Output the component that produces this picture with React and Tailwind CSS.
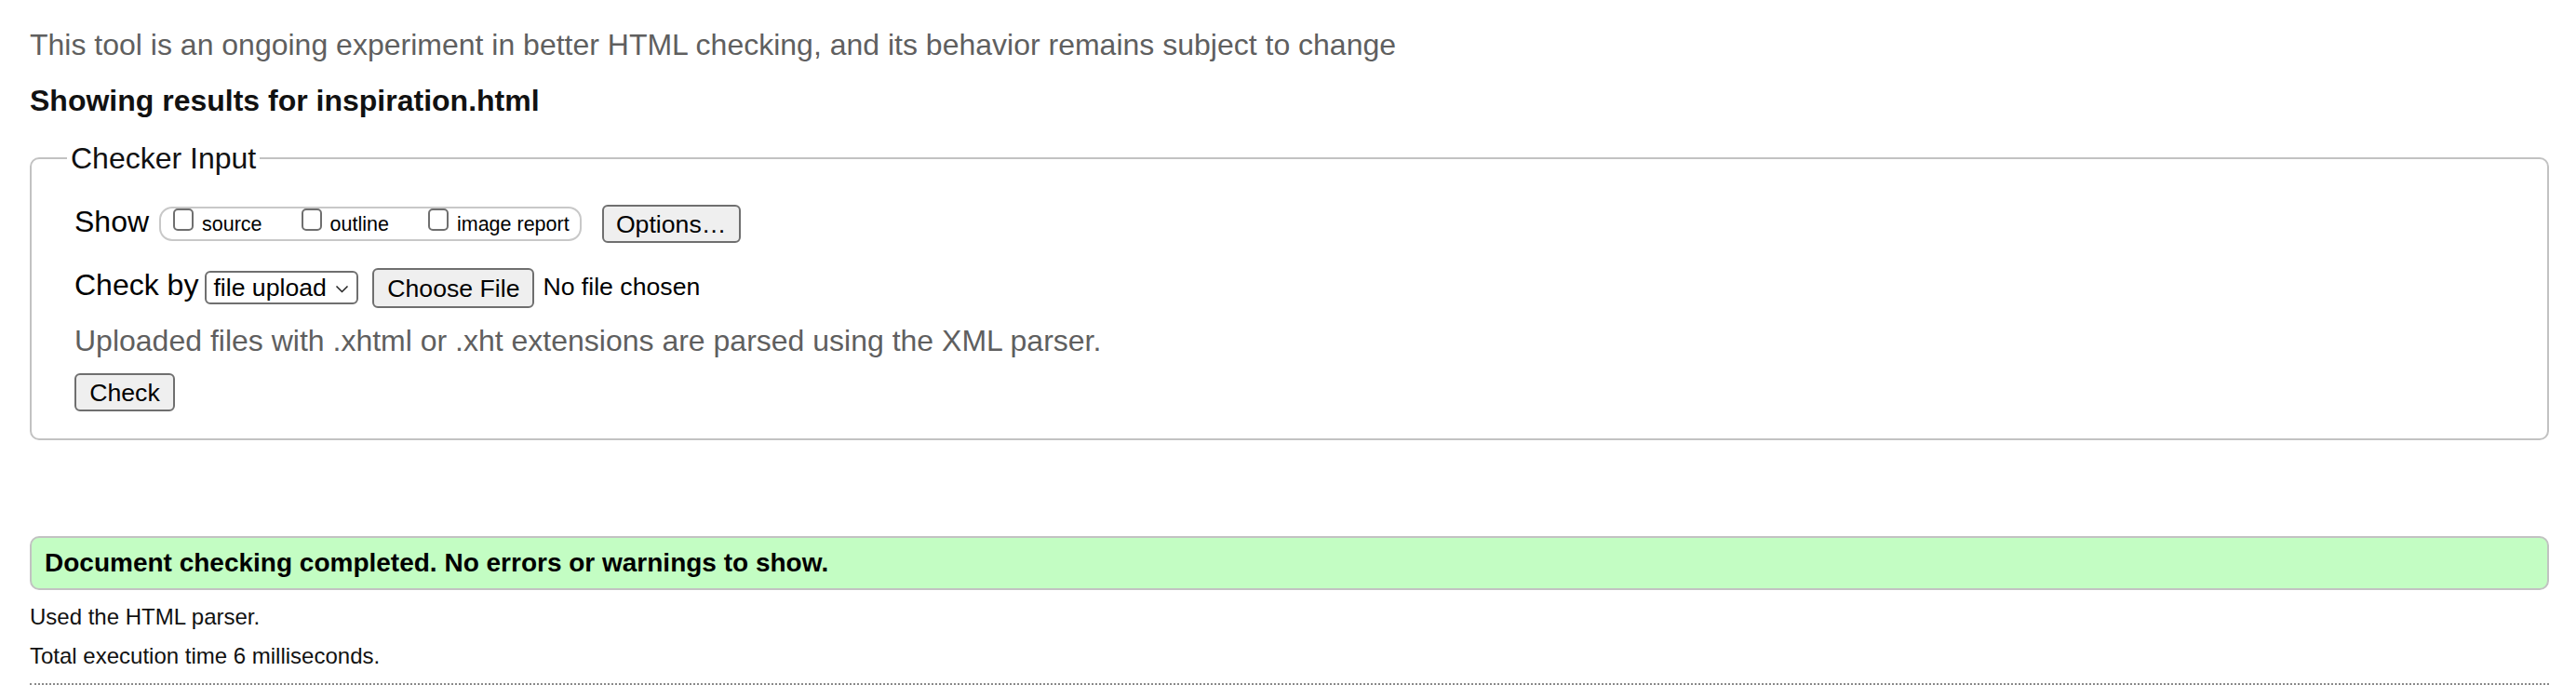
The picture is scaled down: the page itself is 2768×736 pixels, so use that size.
import React from 'react';

const Box = () => (
  <span className="block w-[22px] h-[24px] border-2 border-[#6f6f6f] rounded-[5px] bg-white shrink-0" />
);

const Option = ({ label, first }) => (
  <label className={`flex items-start ${first ? '' : 'ml-[42px]'}`}>
    <Box />
    <span className="ml-[9px] mt-[4px] text-[21.5px] leading-[26px] text-black">{label}</span>
  </label>
);

const Button = ({ children, className = '' }) => (
  <button
    type="button"
    className={`flex items-center justify-center border-2 border-[#6f6f6f] rounded-[6px] bg-[#efefef] text-[26.67px] leading-[30px] text-black ${className}`}
  >
    {children}
  </button>
);

export default function App() {
  return (
    <div
      className="h-[736px] overflow-hidden bg-white pl-[32px] pr-[29px] pt-[30px] text-black"
      style={{ fontFamily: '"Liberation Sans", Arial, sans-serif' }}
    >
      <p className="text-[32px] leading-[36px] text-[#5f5f5f]">
        This tool is an ongoing experiment in better HTML checking, and its behavior remains subject to change
      </p>
      <h2 className="mt-[24px] text-[32px] leading-[36px] font-bold text-[#111]">
        Showing results for inspiration.html
      </h2>

      <fieldset className="mt-[26px] border-2 border-[#c2c2c2] rounded-[10px] pl-[46px] pr-4 pt-[32px] pb-[29px]">
        <legend className="-ml-[8px] px-[4px] text-[32px] leading-[36px] text-[#111]">Checker Input</legend>

        <div className="flex items-start h-[41px]">
          <span className="text-[32px] leading-[36px]">Show</span>
          <div className="ml-[11px] mt-[2px] flex items-start h-[37px] border-2 border-[#c8c8c8] rounded-[14px] pl-[13px] pr-[11px]">
            <Option label="source" first />
            <Option label="outline" />
            <Option label="image report" />
          </div>
          <Button className="ml-[22px] w-[149px] h-[41px]">Options…</Button>
        </div>

        <div className="mt-[27px] flex items-start h-[43px]">
          <span className="text-[32px] leading-[36px]">Check by</span>
          <div className="ml-[7px] mt-[3px] flex items-center h-[36px] w-[165px] border-2 border-[#6f6f6f] rounded-[6px] pl-[7px] pr-[8px]">
            <span className="text-[26.67px] leading-[30px]">file upload</span>
            <svg className="ml-auto mt-[3px]" width="15" height="9" viewBox="0 0 15 9" fill="none">
              <polyline points="1.5,1.5 7.5,7.5 13.5,1.5" stroke="#222" strokeWidth="1.5" />
            </svg>
          </div>
          <Button className="ml-[15px] w-[174px] h-[43px]">Choose File</Button>
          <span className="ml-[9px] mt-[5px] text-[26.67px] leading-[30px]">No file chosen</span>
        </div>

        <p className="mt-[17px] text-[32px] leading-[36px] text-[#5f5f5f]">
          Uploaded files with .xhtml or .xht extensions are parsed using the XML parser.
        </p>

        <Button className="mt-[17px] w-[108px] h-[41px]">Check</Button>
      </fieldset>

      <div className="mt-[103px] flex items-center h-[58px] border-2 border-[#c2c2c2] rounded-[10px] bg-[#c3fdc3] pl-[14px]">
        <p className="text-[28px] leading-[32px] font-bold text-black">
          Document checking completed. No errors or warnings to show.
        </p>
      </div>

      <p className="mt-[15px] text-[24px] leading-[28px] text-[#111]">Used the HTML parser.</p>
      <p className="mt-[14px] text-[24px] leading-[28px] text-[#111]">Total execution time 6 milliseconds.</p>
      <div className="mt-[15px] border-t-2 border-dotted border-[#8a8a8a]" />
    </div>
  );
}
